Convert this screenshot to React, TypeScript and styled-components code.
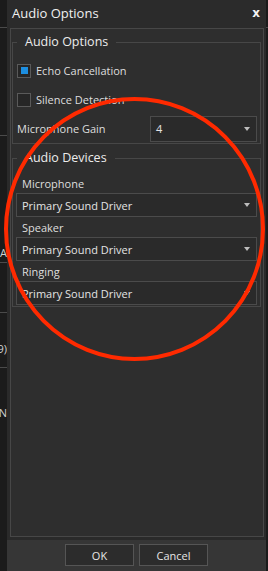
import React from "react";
import styled, { createGlobalStyle } from "styled-components";

const GlobalStyle = createGlobalStyle`
  html, body {
    margin: 0;
    padding: 0;
    background: #1d1d1d;
  }
  * {
    box-sizing: border-box;
  }
`;

const Page = styled.div`
  position: relative;
  display: flex;
  width: 268px;
  height: 571px;
  overflow: hidden;
  background: #1d1d1d;
  font-family: "Open Sans", "Noto Sans", sans-serif;
  color: #dedede;
`;

const Backdrop = styled.div<{ $width: number }>`
  width: ${(p) => p.$width}px;
  flex: none;
  display: flex;
  flex-direction: column;
  overflow: hidden;
  background: #1b1b1b;
`;

const BackdropRow = styled.div<{ $h: number; $line?: boolean }>`
  height: ${(p) => p.$h}px;
  flex: none;
  border-bottom: ${(p) => (p.$line ? "1px solid #4a4a4a" : "none")};
  display: flex;
  align-items: center;
  justify-content: flex-end;
  font-size: 11px;
  color: #d0d0d0;
  white-space: nowrap;
`;

const Dialog = styled.div`
  width: 259px;
  flex: none;
  display: flex;
  flex-direction: column;
  background: #2a2a2a;
`;

const TitleBar = styled.div`
  height: 28px;
  flex: none;
  display: flex;
  align-items: center;
  justify-content: space-between;
  padding: 0 6px 2px 5px;
  background: #2b2b2b;
  font-size: 13px;
  color: #f0f0f0;
`;

const CloseMark = styled.span`
  font-family: "DejaVu Sans", sans-serif;
  font-weight: bold;
  font-size: 12px;
  color: #f4f4f4;
`;

const Body = styled.div`
  flex: 1;
  display: flex;
  padding: 0 2px 3px 3px;
`;

const Panel = styled.div`
  flex: 1;
  display: flex;
  flex-direction: column;
  padding: 0 2px 0 1px;
  border: 1px solid #474747;
  background: #2e2e2e;
`;

const Group = styled.fieldset<{ $top: number; $pt: number; $pb: number }>`
  margin: ${(p) => p.$top}px 0 0 0;
  padding: ${(p) => p.$pt}px 3px ${(p) => p.$pb}px 3px;
  border: 1px solid #474747;
  min-width: 0;
`;

const GroupTitle = styled.legend`
  margin-left: 1px;
  padding: 0 8px;
  font-size: 12.5px;
  line-height: 16px;
  color: #ececec;
`;

const CheckRow = styled.label`
  height: 29px;
  display: flex;
  align-items: center;
  gap: 5px;
  padding-left: 1px;
  font-size: 11px;
`;

const CheckBox = styled.span<{ $checked?: boolean }>`
  width: 14px;
  height: 14px;
  flex: none;
  display: flex;
  align-items: center;
  justify-content: center;
  border: 1px solid #5a5a5a;
  background: #262626;

  &::after {
    content: "";
    width: 7px;
    height: 7px;
    background: ${(p) => (p.$checked ? "#1d8fe1" : "transparent")};
  }
`;

const FieldRow = styled.div`
  height: 29px;
  display: flex;
  align-items: center;
  justify-content: space-between;
  padding-left: 1px;
  font-size: 11px;
`;

const FieldLabel = styled.div`
  height: 20px;
  display: flex;
  align-items: center;
  padding-left: 6px;
  font-size: 11px;
`;

const Select = styled.div<{ $width?: number; $h: number }>`
  width: ${(p) => (p.$width ? `${p.$width}px` : "100%")};
  height: ${(p) => p.$h}px;
  display: flex;
  align-items: center;
  justify-content: space-between;
  padding: 0 6px 0 5px;
  border: 1px solid #4b4b4b;
  background: #2a2a2a;
  font-size: 11px;
  color: #e4e4e4;
`;

const Arrow = styled.span`
  width: 0;
  height: 0;
  border-left: 3.5px solid transparent;
  border-right: 3.5px solid transparent;
  border-top: 4px solid #bdbdbd;
`;

const ButtonBar = styled.div`
  height: 31px;
  flex: none;
  display: flex;
  justify-content: center;
  align-items: flex-start;
  gap: 5px;
  padding-top: 4px;
  background: #363636;
`;

const Button = styled.button`
  width: 69px;
  height: 22px;
  padding: 0;
  border: 1px solid #555555;
  background: #2c2c2c;
  font-family: inherit;
  font-size: 11px;
  color: #e6e6e6;
`;

const Annotation = styled.svg`
  position: absolute;
  left: 0;
  top: 0;
  pointer-events: none;
`;

const devices = ["Microphone", "Speaker", "Ringing"];

export default function App() {
  return (
    <>
      <GlobalStyle />
      <Page>
        <Backdrop $width={7}>
          <BackdropRow $h={28} $line />
          <BackdropRow $h={108} $line />
          <BackdropRow $h={107} />
          <BackdropRow $h={20} $line>A</BackdropRow>
          <BackdropRow $h={50} $line />
          <BackdropRow $h={25} />
          <BackdropRow $h={20}>9)</BackdropRow>
          <BackdropRow $h={10} $line />
          <BackdropRow $h={34} />
          <BackdropRow $h={20}>AN</BackdropRow>
        </Backdrop>
        <Dialog>
          <TitleBar>
            <span>Audio Options</span>
            <CloseMark>x</CloseMark>
          </TitleBar>
          <Body>
            <Panel>
              <Group $top={5} $pt={6} $pb={0}>
                <GroupTitle>Audio Options</GroupTitle>
                <CheckRow>
                  <CheckBox $checked />
                  Echo Cancellation
                </CheckRow>
                <CheckRow>
                  <CheckBox />
                  Silence Detection
                </CheckRow>
                <FieldRow>
                  Microphone Gain
                  <Select $width={107} $h={26}>
                    4
                    <Arrow />
                  </Select>
                </FieldRow>
              </Group>
              <Group $top={6} $pt={7} $pb={1}>
                <GroupTitle>Audio Devices</GroupTitle>
                {devices.map((d) => (
                  <div key={d}>
                    <FieldLabel>{d}</FieldLabel>
                    <Select $h={24}>
                      Primary Sound Driver
                      <Arrow />
                    </Select>
                  </div>
                ))}
              </Group>
            </Panel>
          </Body>
          <ButtonBar>
            <Button>OK</Button>
            <Button>Cancel</Button>
          </ButtonBar>
        </Dialog>
        <Backdrop $width={2}>
          <BackdropRow $h={28} $line />
        </Backdrop>
        <Annotation width="268" height="571" viewBox="0 0 268 571">
          <ellipse
            cx="134.5"
            cy="229"
            rx="128.5"
            ry="130"
            fill="none"
            stroke="#ff2a00"
            strokeWidth="4"
          />
        </Annotation>
      </Page>
    </>
  );
}
